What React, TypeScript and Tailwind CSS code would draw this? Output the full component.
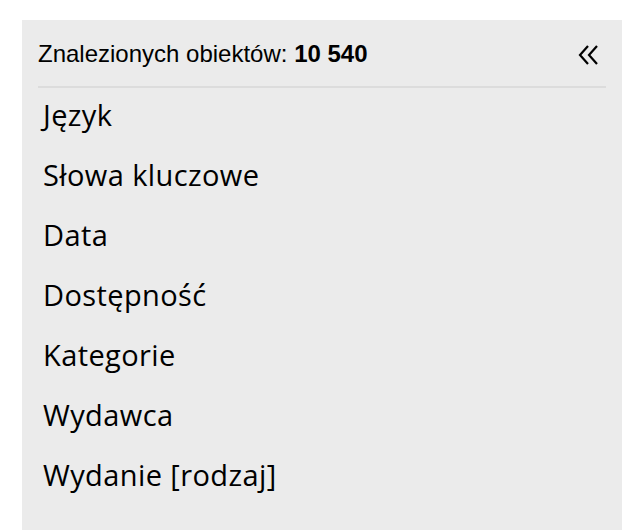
export default function App() {
  const items = ['Język', 'Słowa kluczowe', 'Data', 'Dostępność', 'Kategorie', 'Wydawca', 'Wydanie [rodzaj]'];
  return (
    <div className="w-[636px] h-[530px] bg-white pt-5 pl-[22px] pr-[14px] overflow-hidden">
      <div className="h-[510px] bg-[#ebebeb] px-4">
        {/* header */}
        <div className="flex items-center justify-between h-[68px] border-b-2 border-[#dcdcdc] font-['Liberation_Sans',Arial,sans-serif] text-[24px] text-black">
          <span className="mt-0.5">
            Znalezionych obiektów: <b>10 540</b>
          </span>
          <svg width="22" height="22" viewBox="0 0 22 22" className="mr-1.5 mt-1" fill="none" stroke="#000" strokeWidth="2.2">
            <path d="M10 2 L2 11 L10 20" />
            <path d="M19 2 L11 11 L19 20" />
          </svg>
        </div>

        {/* filters */}
        <ul className="pl-[5px] -mt-[3px] font-['Open_Sans','Lato',sans-serif] font-medium text-[29px] tracking-[0.4px] text-black">
          {items.map((it) => (
            <li key={it} className="h-[60px] flex items-center">
              {it}
            </li>
          ))}
        </ul>
      </div>
    </div>
  );
}
